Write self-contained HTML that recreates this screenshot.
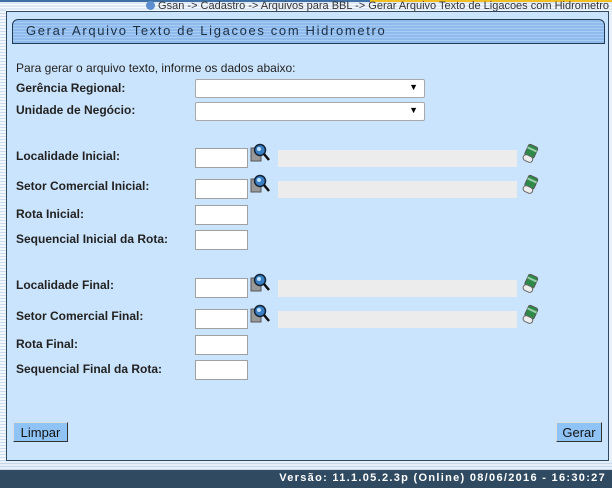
<!DOCTYPE html>
<html><head><meta charset="utf-8"><style>
body{margin:0;width:612px;height:488px;position:relative;overflow:hidden;background:#e8f1fb;font-family:"Liberation Sans",Arial,sans-serif;}
.a{position:absolute}
.lbl{position:absolute;left:16px;font-size:12px;font-weight:bold;color:#222}
.inp{position:absolute;left:195px;width:53px;height:20px;background:#fff;border:1px solid #a0a0a0;box-sizing:border-box}
.gray{position:absolute;left:278px;width:239px;height:17px;background:#ececec}
.sel{position:absolute;left:195px;width:230px;height:19px;background:#fff;border:1px solid #a9a9a9;box-sizing:border-box;border-radius:2px}
.sel:after{content:"▼";position:absolute;right:6px;top:2px;font-size:9px;color:#000}
.btn{position:absolute;top:422px;height:20px;background:#8fc3f5;border:1px solid #555;border-color:#ddd #333 #333 #ddd;font-size:13px;line-height:19px;text-align:center;box-sizing:border-box;color:#111}
</style></head><body>
<div class="a" style="left:0;top:0;width:612px;height:2px;background:#3e6fa5"></div>
<div class="a" style="left:370px;top:0;width:242px;height:3px;background:#f0c020"></div>
<div class="a" style="left:0;top:2px;width:612px;height:10px;background:repeating-linear-gradient(#dfeaf6 0 2px,#f7fbff 2px 3px)"></div>
<div class="a" style="left:0;top:10px;width:6px;height:458px;background:repeating-linear-gradient(#c8dbef 0 1px,#f2f7fc 1px 3px)"></div>
<div class="a" style="left:146px;top:0px;font-size:11px;color:#333;white-space:nowrap"><span style="display:inline-block;width:9px;height:9px;border-radius:50%;background:#5c8ed0;vertical-align:-1px"></span> Gsan -&gt; Cadastro -&gt; Arquivos para BBL -&gt; Gerar Arquivo Texto de Ligacoes com Hidrometro</div>
<div class="a" style="left:6px;top:11px;width:603px;height:450px;background:#cbe4fd;border:1px solid #2f4a60;box-sizing:border-box"></div>
<div class="a" style="left:12px;top:19px;width:593px;height:25px;border:1px solid #243b55;border-radius:6px 6px 0 0;box-sizing:border-box;background:repeating-linear-gradient(#8fbbec 0 2px,#a8ccf3 2px 3px)"></div>
<div class="a" style="left:26px;top:23px;font-size:13px;letter-spacing:1.65px;color:#1d2f45">Gerar Arquivo Texto de Ligacoes com Hidrometro</div>
<div class="a" style="left:16px;top:61px;font-size:12px;color:#222">Para gerar o arquivo texto, informe os dados abaixo:</div>
<div class="lbl" style="top:81px">Gerência Regional:</div><div class="sel" style="top:79px"></div>
<div class="lbl" style="top:103px">Unidade de Negócio:</div><div class="sel" style="top:102px"></div>

<div class="lbl" style="top:149px">Localidade Inicial:</div><div class="inp" style="top:148px"></div><div class="gray" style="top:150px"></div>
<div class="lbl" style="top:179px">Setor Comercial Inicial:</div><div class="inp" style="top:179px"></div><div class="gray" style="top:181px"></div>
<div class="lbl" style="top:207px">Rota Inicial:</div><div class="inp" style="top:205px"></div>
<div class="lbl" style="top:232px">Sequencial Inicial da Rota:</div><div class="inp" style="top:230px"></div>
<div class="lbl" style="top:278px">Localidade Final:</div><div class="inp" style="top:278px"></div><div class="gray" style="top:280px"></div>
<div class="lbl" style="top:309px">Setor Comercial Final:</div><div class="inp" style="top:309px"></div><div class="gray" style="top:311px"></div>
<div class="lbl" style="top:337px">Rota Final:</div><div class="inp" style="top:335px"></div>
<div class="lbl" style="top:362px">Sequencial Final da Rota:</div><div class="inp" style="top:360px"></div>

<svg class="a" style="left:0;top:0" width="612" height="488">
<defs>
<g id="m"><rect x="1" y="4" width="10" height="13" fill="#999" stroke="#555"/><circle cx="10" cy="6" r="5.5" fill="#3a7fc4" stroke="#123" stroke-width="1.5"/><circle cx="9" cy="5" r="2" fill="#bfe3ff"/><line x1="14" y1="10" x2="19" y2="16" stroke="#111" stroke-width="2.5"/></g>
<g id="e"><g transform="rotate(25 9 9)"><rect x="4" y="0" width="10" height="12" rx="2" fill="#2f8a4a" stroke="#555"/><rect x="4" y="3" width="10" height="2" fill="#9ad0a8"/><rect x="4" y="11" width="10" height="6" rx="3" fill="#eee" stroke="#666"/></g></g>
</defs>
<use href="#m" x="250" y="144"/><use href="#m" x="250" y="175"/><use href="#m" x="250" y="274"/><use href="#m" x="250" y="305"/>
<use href="#e" x="521" y="145"/><use href="#e" x="521" y="176"/><use href="#e" x="521" y="275"/><use href="#e" x="521" y="306"/>
</svg>

<div class="btn" style="left:13px;width:55px">Limpar</div>
<div class="btn" style="left:556px;width:46px">Gerar</div>
<div class="a" style="left:0;top:461px;width:612px;height:9px;background:repeating-linear-gradient(#e6eef7 0 2px,#c7d8ea 2px 3px)"></div>
<div class="a" style="left:0;top:470px;width:612px;height:18px;background:#2f4a61"></div>
<div class="a" style="right:6px;top:472px;font-size:11px;font-weight:bold;letter-spacing:1.3px;color:#fff;white-space:nowrap">Versão: 11.1.05.2.3p (Online) 08/06/2016 - 16:30:27</div>
</body></html>
